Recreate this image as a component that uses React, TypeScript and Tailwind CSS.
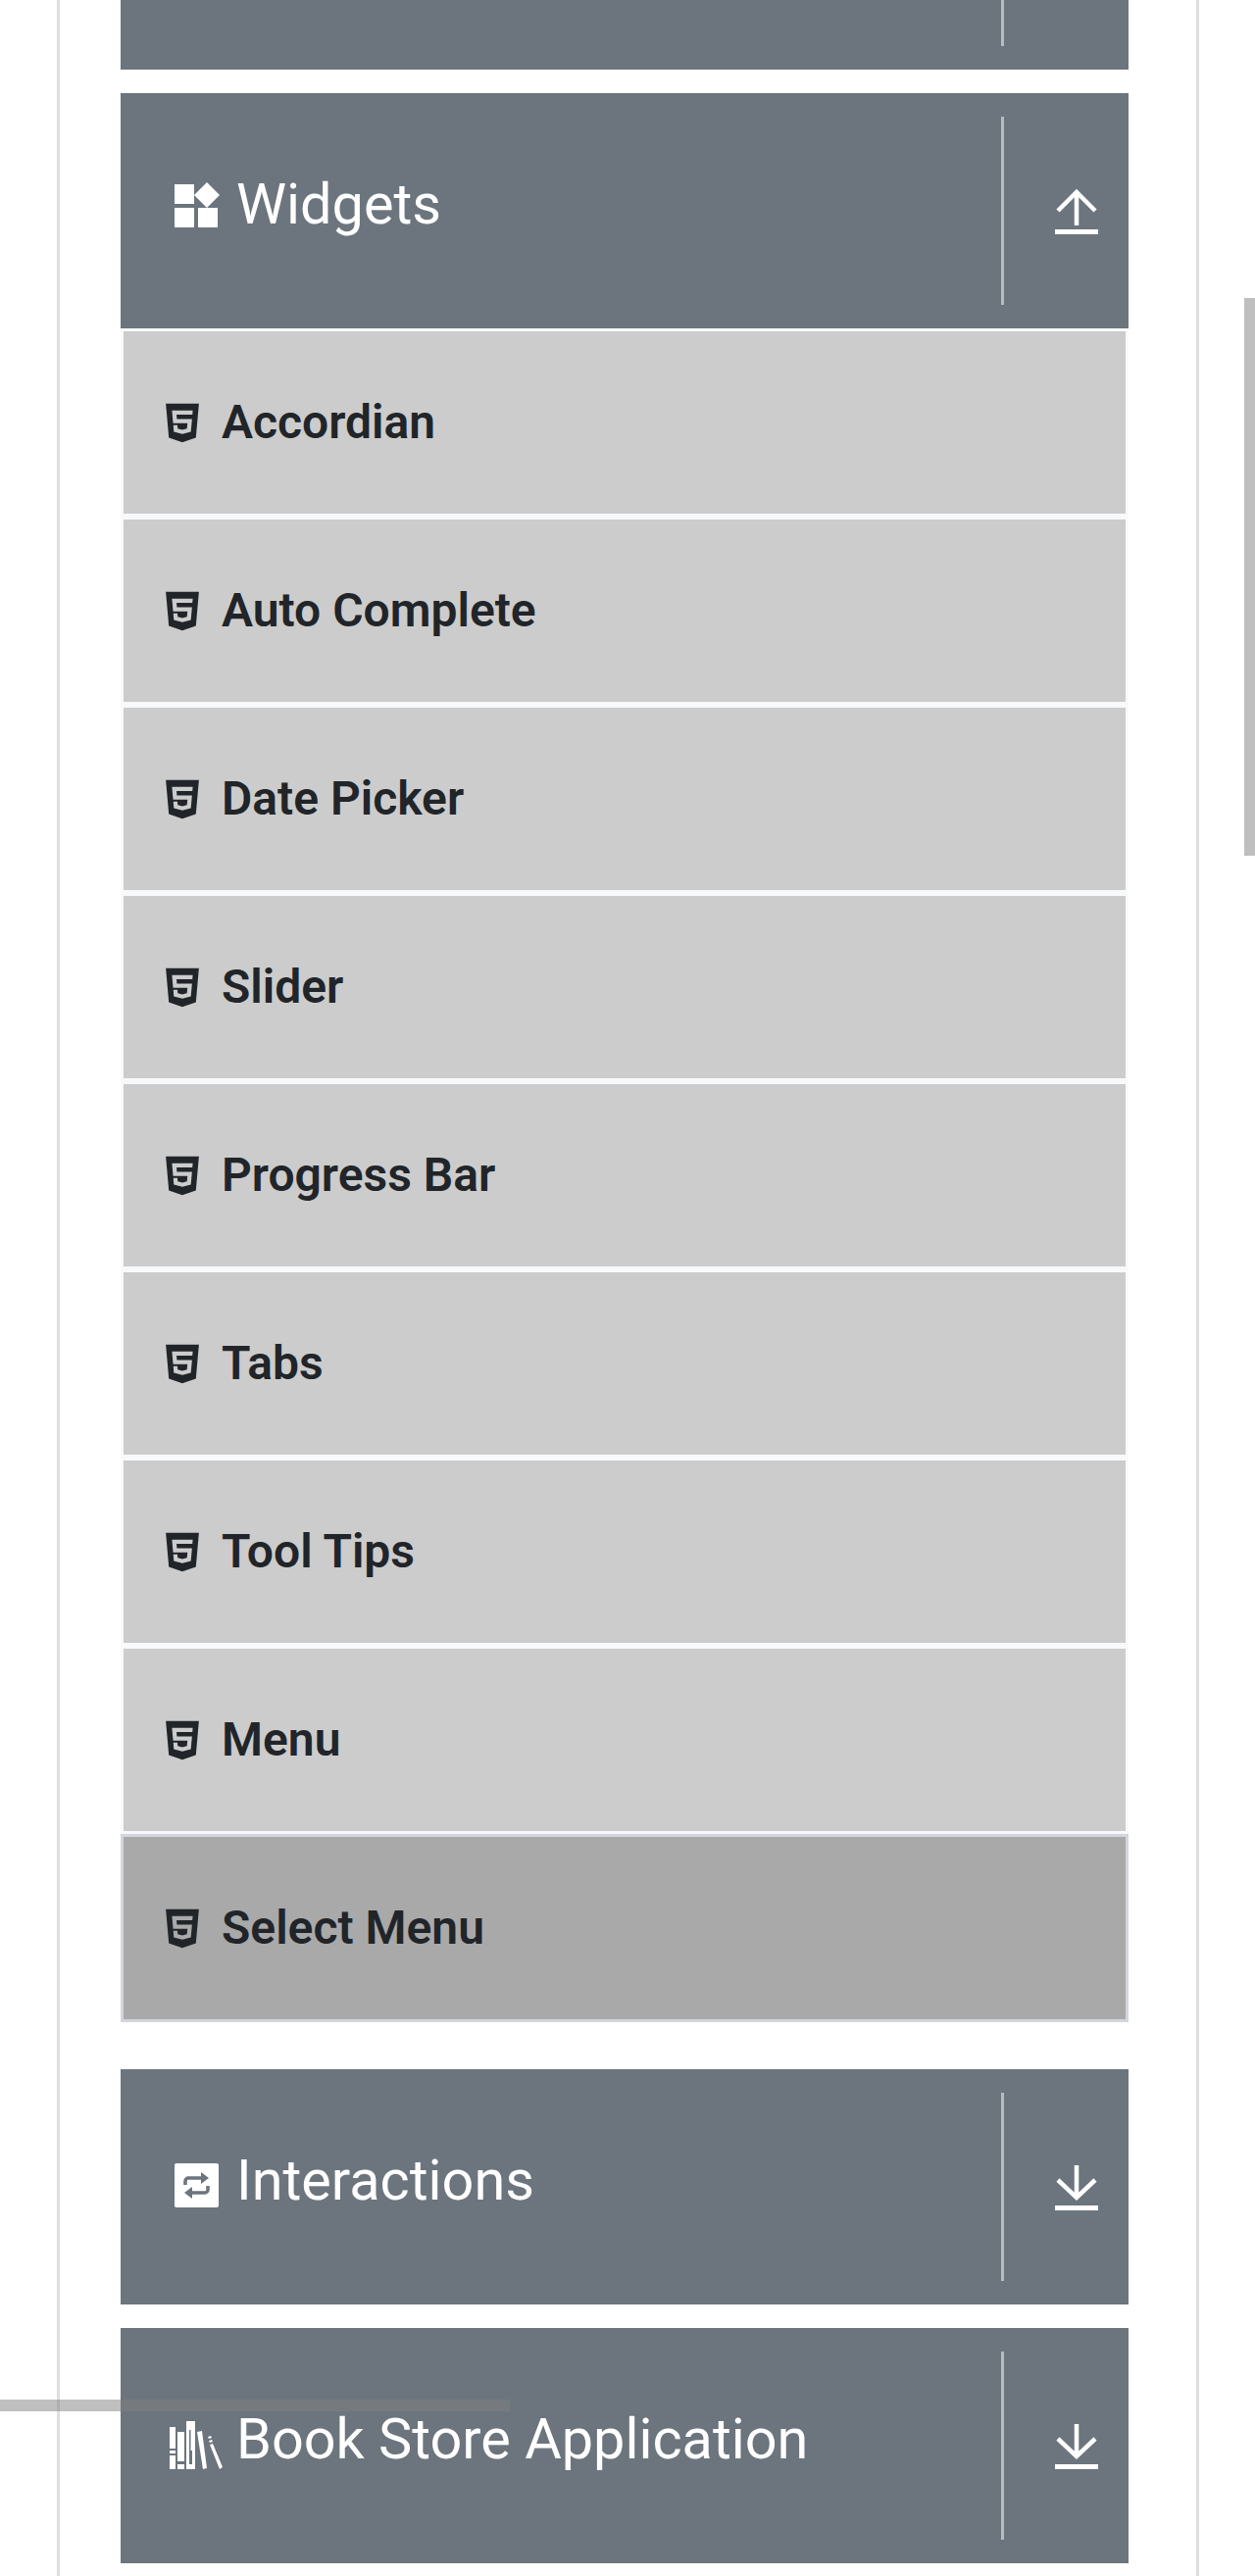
import React from 'react';
import { FaHtml5 } from 'react-icons/fa';

const items = ['Accordian', 'Auto Complete', 'Date Picker', 'Slider', 'Progress Bar', 'Tabs', 'Tool Tips', 'Menu', 'Select Menu'];

function WidgetsIcon() {
  return (
    <svg viewBox="0 0 48 48" className="w-[48px] h-[48px] ml-[3px]" fill="white">
      <rect x="2" y="3" width="20" height="20" />
      <rect x="2" y="27" width="20" height="20" />
      <rect x="26" y="27" width="20" height="20" />
      <path d="M35 1 L48 14 L35 27 L22 14 Z" />
    </svg>
  );
}

function InteractionsIcon() {
  return (
    <svg viewBox="0 0 45 45" className="w-[45px] h-[45px] ml-[5px] mt-[8px]">
      <rect width="45" height="45" rx="2" fill="white" />
      <path d="M11 22 V18 a3 3 0 0 1 3 -3 H28" fill="none" stroke="#6c757d" strokeWidth="3.5" />
      <path d="M27 9 L35 15 L27 21 Z" fill="#6c757d" />
      <path d="M34 23 V27 a3 3 0 0 1 -3 3 H17" fill="none" stroke="#6c757d" strokeWidth="3.5" />
      <path d="M18 24 L10 30 L18 36 Z" fill="#6c757d" />
    </svg>
  );
}

function BooksIcon() {
  return (
    <svg viewBox="0 0 54 50" className="w-[54px] h-[50px] mt-[12px]" fill="white">
      <rect x="0" y="6" width="6" height="22" />
      <rect x="0" y="30" width="6" height="3" />
      <rect x="0" y="35" width="6" height="14" />
      <rect x="8" y="11" width="7" height="30" />
      <rect x="8" y="44" width="7" height="5" />
      <path fillRule="evenodd" d="M17 0 H26 V49 H17 Z M20 9 V44 H23 V30 H21.5 V9 Z" />
      <path d="M28 11 L33 10 L38 48 L34 49 Z" />
      <path d="M39 16 L42 15 L43 17 L40 18 Z M40 20 L43 19 L44 21 L41 22 Z" />
      <path d="M41 24 L44 23 L54 47 L51 49 Z" />
    </svg>
  );
}

function ArrowIcon({ up }: { up: boolean }) {
  return (
    <svg viewBox="0 0 44 46" className="w-[44px] h-[46px]" fill="none" stroke="white" strokeWidth="4.5">
      {up ? (
        <path d="M3 22 L22 3 L41 22 M22 3 V37" />
      ) : (
        <path d="M3 15 L22 33 L41 15 M22 33 V0" />
      )}
      <path d="M0 43.5 H44" strokeWidth="5" />
    </svg>
  );
}

function GroupHeader({ title, icon, up }: { title: string; icon: React.ReactNode; up?: boolean }) {
  return (
    <div className="flex h-[240px] bg-[#6c757d] text-white">
      <div className="flex-1 flex items-center pl-[50px] pb-[12px]">
        <div className="w-[68px] flex">{icon}</div>
        <span className="text-[57.6px] leading-[84px]">{title}</span>
      </div>
      <div className="w-[3px] my-6 bg-[#b9bbbd]" />
      <div className="w-[127px] pl-[52px] pt-[2px] flex items-center">
        <ArrowIcon up={!!up} />
      </div>
    </div>
  );
}

export default function App() {
  return (
    <div className="relative h-[2628px] overflow-hidden bg-white font-['Roboto',sans-serif] text-[#212529]">
      <div className="ml-[58px] w-[1165px] h-full border-x-[3px] border-[#dedede] pl-[62px] pr-[69px]">
        {/* card cut off by the scroll position */}
        <div className="flex justify-end h-[71px] bg-[#6c757d] mb-6">
          <div className="w-[3px] h-[47px] bg-[#b9bbbd] mr-[127px]" />
        </div>

        <GroupHeader title="Widgets" icon={<WidgetsIcon />} up />
        <div className="mb-12">
          {items.map((item) => {
            const active = item === 'Select Menu';
            return (
              <div
                key={item}
                className={
                  active
                    ? 'flex items-center gap-[23px] h-[192px] pl-[43px] border-[3px] border-[#d3d6dc] bg-[#a9a9a9]'
                    : 'flex items-center gap-[23px] h-[192px] pl-[43px] border-[3px] border-[#f8f9fa] bg-[#cccccc]'
                }
              >
                <FaHtml5 className="w-[34px] h-[45px]" />
                <span className="text-[48px] leading-[72px] font-semibold">{item}</span>
              </div>
            );
          })}
        </div>

        <div className="mb-6">
          <GroupHeader title="Interactions" icon={<InteractionsIcon />} />
        </div>
        <GroupHeader title="Book Store Application" icon={<BooksIcon />} />
      </div>

      {/* overlay scrollbars */}
      <div className="absolute right-0 top-[304px] w-[11px] h-[569px] bg-[#7f7f7f]/50" />
      <div className="absolute left-0 top-[2448px] w-[520px] h-[12px] bg-[#7f7f7f]/50" />
    </div>
  );
}
